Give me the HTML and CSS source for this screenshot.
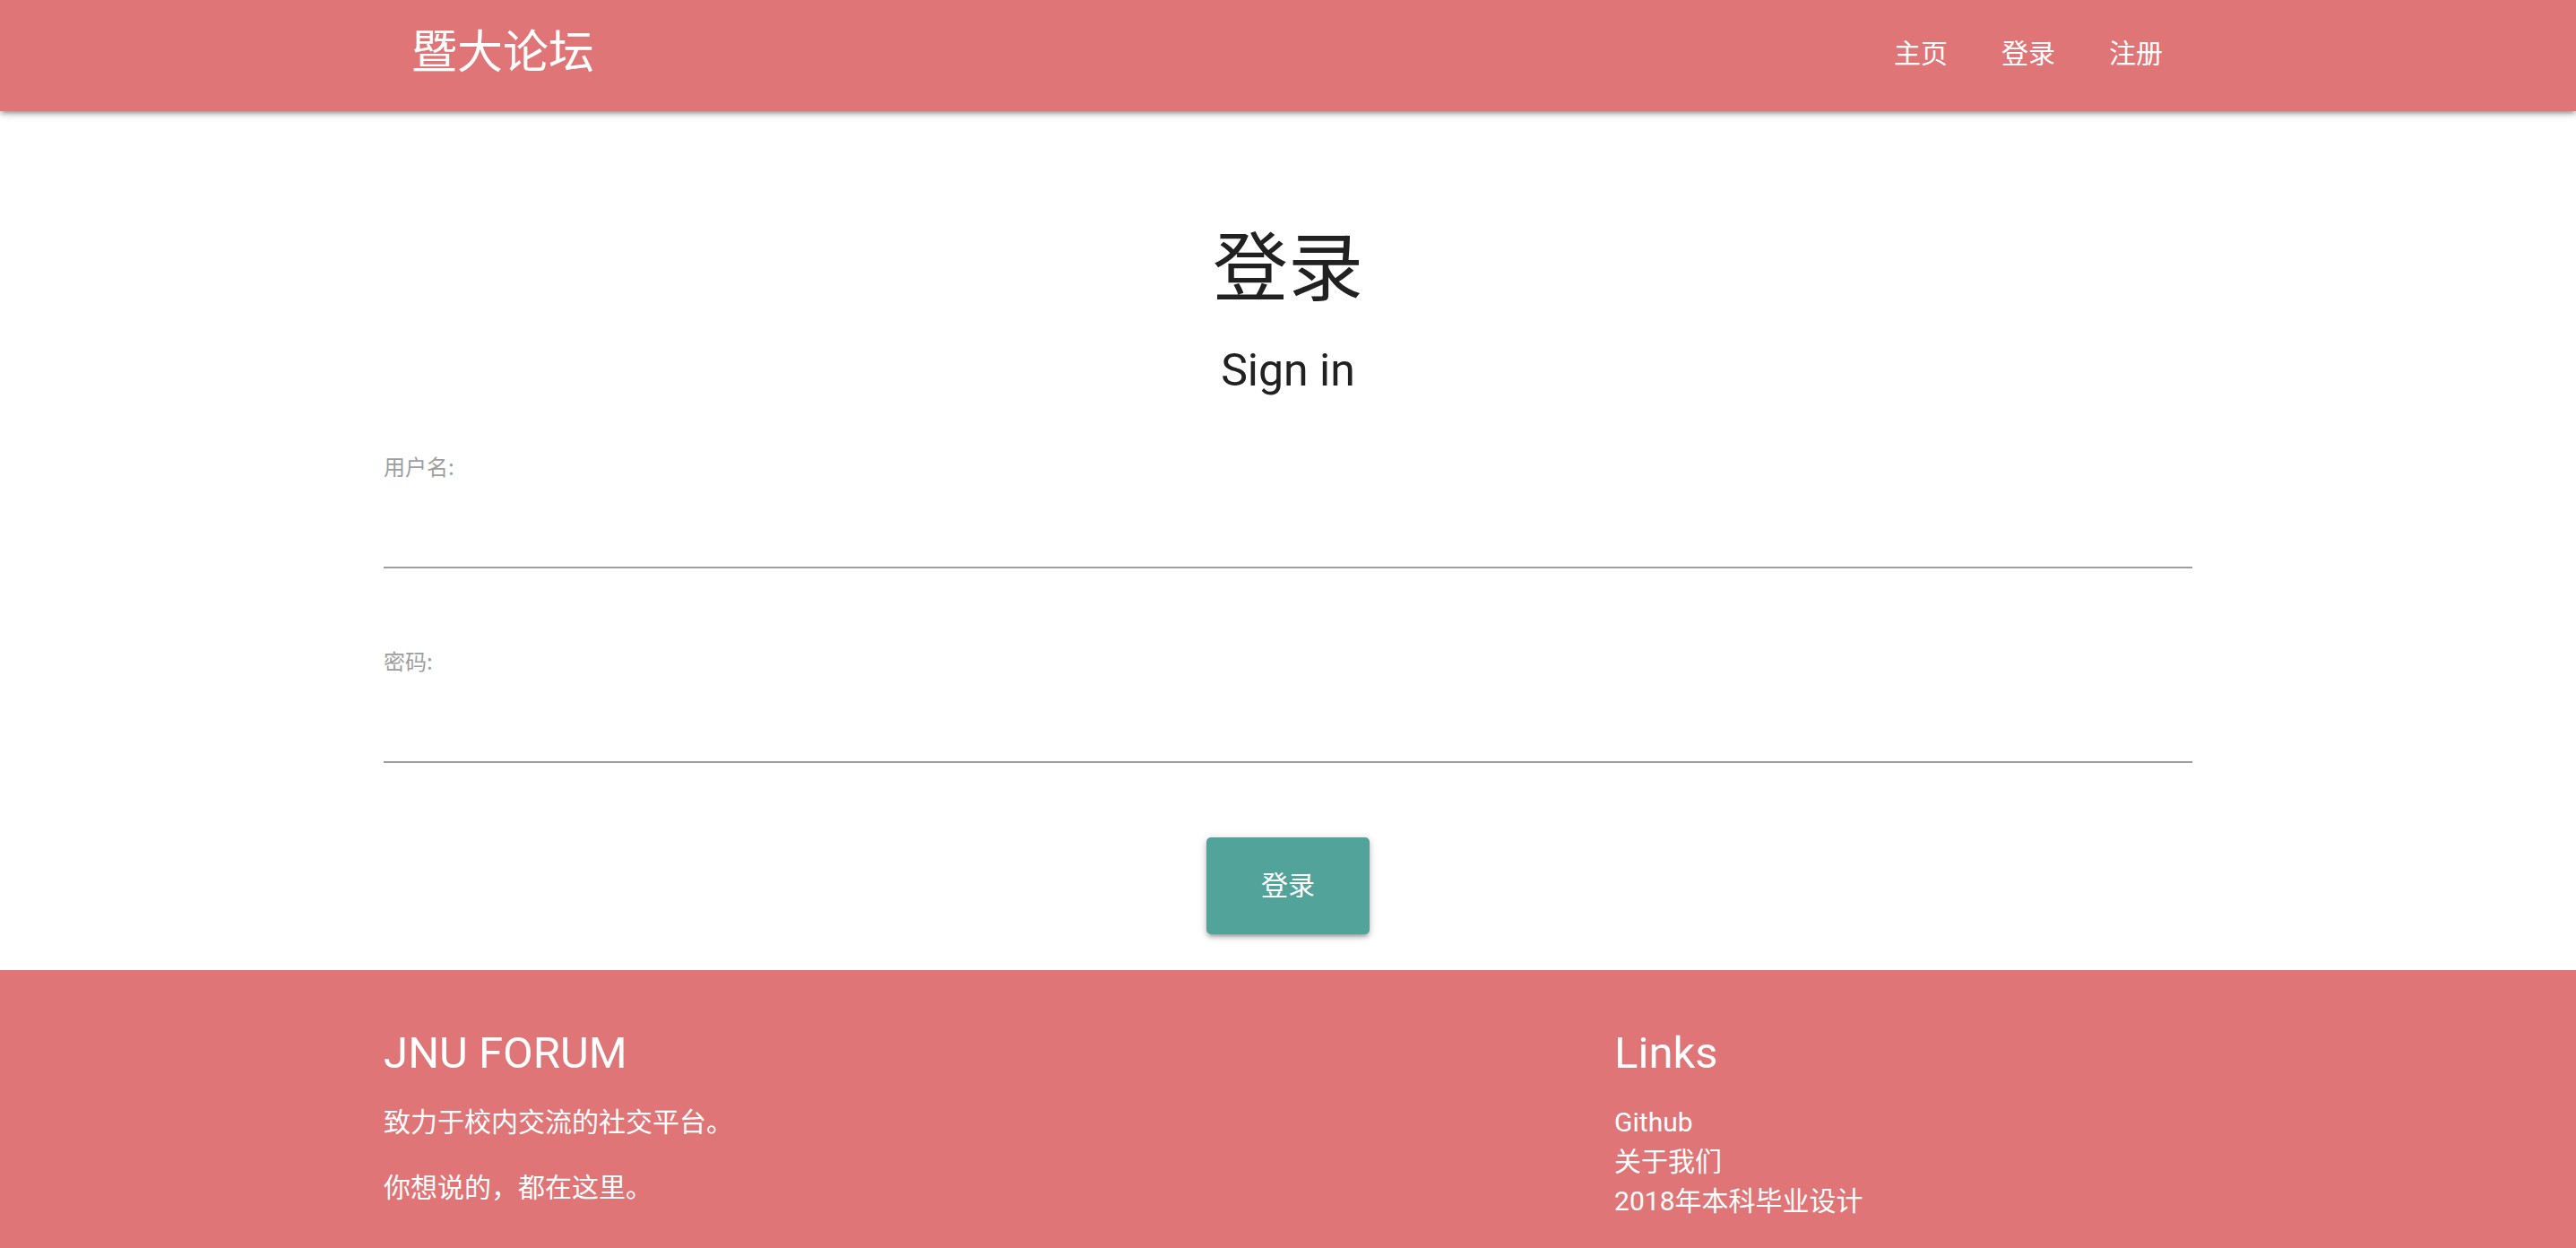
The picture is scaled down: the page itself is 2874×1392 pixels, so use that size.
FILE: index.html
```html
<!DOCTYPE html>
<html lang="zh-CN">
<head>
<meta charset="utf-8">
<title>暨大论坛 - 登录</title>
<link rel="stylesheet" href="styles.css">
</head>
<body>
<header class="navbar">
  <div class="container nav-inner">
    <a class="brand" href="#">暨大论坛</a>
    <ul class="nav-links">
      <li><a href="#">主页</a></li>
      <li><a href="#">登录</a></li>
      <li><a href="#">注册</a></li>
    </ul>
  </div>
</header>

<main class="main">
  <div class="container wide">
    <h1 class="title">登录</h1>
    <h2 class="subtitle">Sign in</h2>
    <form class="login-form">
      <div class="field">
        <label class="field-label" for="username">用户名:</label>
        <input class="field-input" id="username" type="text">
      </div>
      <div class="field">
        <label class="field-label" for="password">密码:</label>
        <input class="field-input" id="password" type="password">
      </div>
      <div class="actions">
        <button class="btn" type="button">登录</button>
      </div>
    </form>
  </div>
</main>

<footer class="footer">
  <div class="container wide footer-inner">
    <div class="footer-col footer-about">
      <h5 class="footer-title">JNU FORUM</h5>
      <p class="footer-text first">致力于校内交流的社交平台。</p>
      <p class="footer-text second">你想说的，都在这里。</p>
    </div>
    <div class="footer-col footer-links">
      <h5 class="footer-title">Links</h5>
      <ul class="link-list">
        <li><a href="#">Github</a></li>
        <li><a href="#">关于我们</a></li>
        <li><a href="#">2018年本科毕业设计</a></li>
      </ul>
    </div>
  </div>
</footer>
</body>
</html>
```

FILE: styles.css
```css
* { box-sizing: border-box; }

html, body {
  margin: 0;
  padding: 0;
}

body {
  font-family: Roboto, "Noto Sans CJK SC", sans-serif;
  color: rgba(0, 0, 0, 0.87);
  background: #ffffff;
}

a { text-decoration: none; color: inherit; }

.container {
  width: 70%;
  margin: 0 auto;
}

.container.wide {
  width: calc(70% + 6px);
}

/* ---------- navbar ---------- */
.navbar {
  height: 124px;
  background: #df7577;
  box-shadow: 0 4px 4px 0 rgba(0,0,0,0.14), 0 6px 2px -4px rgba(0,0,0,0.12), 0 2px 10px 0 rgba(0,0,0,0.2);
  position: relative;
  z-index: 2;
}

.nav-inner {
  display: flex;
  justify-content: space-between;
  align-items: flex-start;
  height: 124px;
}

.brand {
  font-family: "Noto Sans CJK SC", sans-serif;
  font-size: 51px;
  line-height: 108px;
  height: 108px;
  color: #ffffff;
  margin-left: 28px;
}

.nav-links {
  display: flex;
  list-style: none;
  margin: 0;
  padding: 0;
}

.nav-links a {
  display: block;
  font-family: "Noto Sans CJK SC", sans-serif;
  font-size: 30px;
  line-height: 114px;
  height: 114px;
  padding: 0 30px;
  color: #ffffff;
}

/* ---------- main ---------- */
.main {
  padding-top: 119px;
  padding-bottom: 40px;
}

.title {
  font-family: "Noto Sans CJK SC", sans-serif;
  font-weight: 400;
  font-size: 84px;
  line-height: 100px;
  height: 100px;
  margin: 0;
  text-align: center;
  color: #212121;
}

.subtitle {
  font-family: Roboto, sans-serif;
  font-weight: 400;
  font-size: 50px;
  line-height: 60px;
  height: 60px;
  margin: 40px 0 0;
  text-align: center;
  color: #212121;
}

.login-form {
  margin-top: 63px;
  display: flex;
  flex-direction: column;
}

.field {
  display: flex;
  flex-direction: column;
}

.field + .field {
  margin-top: 89px;
}

.field-label {
  font-family: "Noto Sans CJK SC", sans-serif;
  font-size: 24px;
  line-height: 28px;
  height: 30px;
  color: #9e9e9e;
}

.field-input {
  display: block;
  width: 100%;
  height: 98px;
  border: none;
  border-bottom: 2px solid #9e9e9e;
  background: transparent;
  outline: none;
  padding: 0;
  margin: 0;
  font-size: 30px;
}

.actions {
  display: flex;
  justify-content: center;
  margin-top: 83px;
}

.btn {
  width: 182px;
  height: 108px;
  border: none;
  border-radius: 5px;
  background: #52a39a;
  color: #ffffff;
  font-family: "Noto Sans CJK SC", sans-serif;
  font-size: 30px;
  line-height: 102px;
  padding: 0 0 6px;
  box-shadow: 0 4px 4px 0 rgba(0,0,0,0.14), 0 6px 2px -4px rgba(0,0,0,0.12), 0 2px 10px 0 rgba(0,0,0,0.2);
  cursor: pointer;
}

/* ---------- footer ---------- */
.footer {
  background: #df7577;
  color: #ffffff;
  padding-top: 63px;
  height: 310px;
  overflow: hidden;
}

.footer-inner {
  display: flex;
}

.footer-about {
  width: 1373px;
}

.footer-links {
  flex: 1;
}

.footer-title {
  font-family: Roboto, sans-serif;
  font-weight: 400;
  font-size: 49px;
  line-height: 60px;
  height: 60px;
  margin: 0;
}

.footer-text {
  font-family: "Noto Sans CJK SC", sans-serif;
  font-size: 30px;
  line-height: 44px;
  height: 44px;
  margin: 0;
}

.footer-text.first { margin-top: 22px; }
.footer-text.second { margin-top: 29px; }

.link-list {
  list-style: none;
  margin: 25px 0 0;
  padding: 0;
}

.link-list a {
  display: block;
  font-family: Roboto, "Noto Sans CJK SC", sans-serif;
  font-size: 30px;
  line-height: 44px;
  height: 44px;
  color: #ffffff;
}
```
